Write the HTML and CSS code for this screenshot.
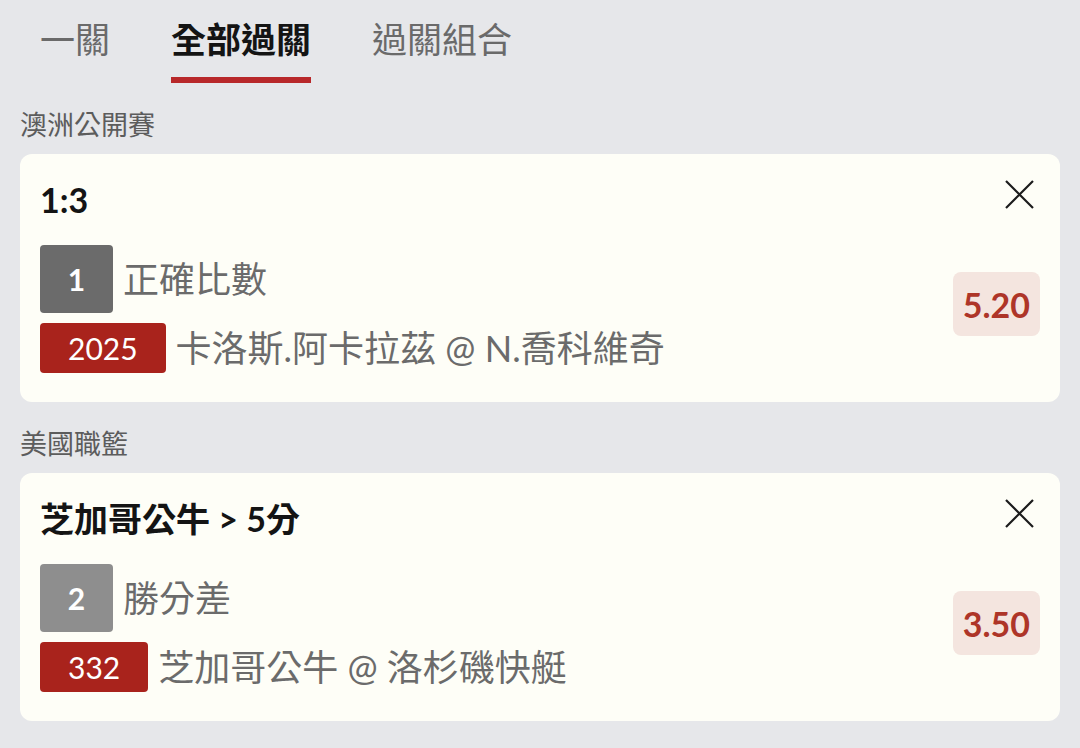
FILE: index.html
```html
<!DOCTYPE html>
<html lang="zh-Hant">
<head>
    <meta charset="UTF-8">
    <meta name="viewport" content="width=device-width, initial-scale=1.0">
    <title>投注單</title>
    <link rel="stylesheet" href="styles.css">
</head>
<body>
    <nav class="tabs">
        <span class="tab">一關</span>
        <span class="tab tab-active">全部過關</span>
        <span class="tab">過關組合</span>
    </nav>

    <section class="group">
        <h2 class="group-title">澳洲公開賽</h2>
        <div class="bet-card">
            <div class="bet-head">
                <h3 class="bet-pick">1:3</h3>
                <button class="bet-remove" aria-label="移除">
                    <svg viewBox="0 0 29 29" width="29" height="29">
                        <path d="M1 1L28 28M28 1L1 28" stroke="#1c1c1c" stroke-width="2.2" fill="none"/>
                    </svg>
                </button>
            </div>
            <div class="bet-body">
                <div class="bet-legs">
                    <div class="leg-row">
                        <span class="leg-no leg-no-dark">1</span>
                        <span class="leg-text">正確比數</span>
                    </div>
                    <div class="leg-row">
                        <span class="leg-code">2025</span>
                        <span class="leg-text">卡洛斯.阿卡拉茲 @ N.喬科維奇</span>
                    </div>
                </div>
                <div class="bet-odds">5.20</div>
            </div>
        </div>
    </section>

    <section class="group">
        <h2 class="group-title">美國職籃</h2>
        <div class="bet-card">
            <div class="bet-head">
                <h3 class="bet-pick">芝加哥公牛 &gt; 5分</h3>
                <button class="bet-remove" aria-label="移除">
                    <svg viewBox="0 0 29 29" width="29" height="29">
                        <path d="M1 1L28 28M28 1L1 28" stroke="#1c1c1c" stroke-width="2.2" fill="none"/>
                    </svg>
                </button>
            </div>
            <div class="bet-body">
                <div class="bet-legs">
                    <div class="leg-row">
                        <span class="leg-no leg-no-light">2</span>
                        <span class="leg-text">勝分差</span>
                    </div>
                    <div class="leg-row">
                        <span class="leg-code">332</span>
                        <span class="leg-text">芝加哥公牛 @ 洛杉磯快艇</span>
                    </div>
                </div>
                <div class="bet-odds">3.50</div>
            </div>
        </div>
    </section>
</body>
</html>
```

FILE: styles.css
```css
:root {
    --bg: #e6e7ea;
    --card: #fefef7;
    --red: #a9231c;
    --tab-line: #b8282a;
    --odds-bg: #f4e5df;
    --odds-text: #ae3528;
    --text-dark: #141414;
    --text-grey: #6b6b6b;
}

* {
    margin: 0;
    padding: 0;
    box-sizing: border-box;
}

body {
    font-family: Lato, "Noto Sans CJK TC", sans-serif;
    background: var(--bg);
    min-height: 100vh;
    padding: 0 20px;
}

/* tabs */
.tabs {
    display: flex;
    gap: 61px;
    padding-left: 20px;
    font-family: "Noto Sans CJK TC", sans-serif;
}

.tab {
    font-size: 35px;
    line-height: 44px;
    color: #6a6a6a;
    padding: 16px 0 17px;
    border-bottom: 6px solid transparent;
}

.tab-active {
    color: var(--text-dark);
    font-weight: 700;
    border-bottom-color: var(--tab-line);
}

/* groups */
.group-title {
    font-family: "Noto Sans CJK TC", sans-serif;
    font-size: 27px;
    line-height: 35px;
    font-weight: 400;
    color: #5c5c5c;
    margin: 23px 0 13px;
}

.bet-card {
    background: var(--card);
    border-radius: 12px;
    padding: 26px 20px 29px;
}

.bet-head {
    display: flex;
    justify-content: space-between;
    align-items: flex-start;
}

.bet-pick {
    font-size: 34px;
    line-height: 40px;
    font-weight: 700;
    color: var(--text-dark);
}

.bet-remove {
    border: none;
    background: none;
    line-height: 0;
    margin-right: 6px;
    cursor: pointer;
}

.bet-body {
    display: flex;
    justify-content: space-between;
    align-items: center;
    margin-top: 25px;
}

.bet-legs {
    display: flex;
    flex-direction: column;
    gap: 10px;
}

.leg-row {
    display: flex;
    align-items: center;
    gap: 10px;
}

.leg-no {
    width: 73px;
    height: 68px;
    border-radius: 4px;
    display: flex;
    justify-content: center;
    align-items: center;
    color: #fff;
    font-size: 30px;
    font-weight: 700;
}

.leg-no-dark {
    background: #6b6b6b;
}

.leg-no-light {
    background: #8e8e8e;
}

.leg-code {
    height: 50px;
    padding: 0 28px;
    border-radius: 4px;
    background: var(--red);
    color: #fff;
    font-size: 30px;
    display: flex;
    align-items: center;
}

.leg-text {
    font-size: 36px;
    line-height: 44px;
    color: var(--text-grey);
}

.bet-odds {
    height: 64px;
    padding: 0 10px;
    margin-bottom: 10px;
    border-radius: 8px;
    background: var(--odds-bg);
    color: var(--odds-text);
    font-size: 34px;
    font-weight: 700;
    display: flex;
    align-items: center;
}
```
